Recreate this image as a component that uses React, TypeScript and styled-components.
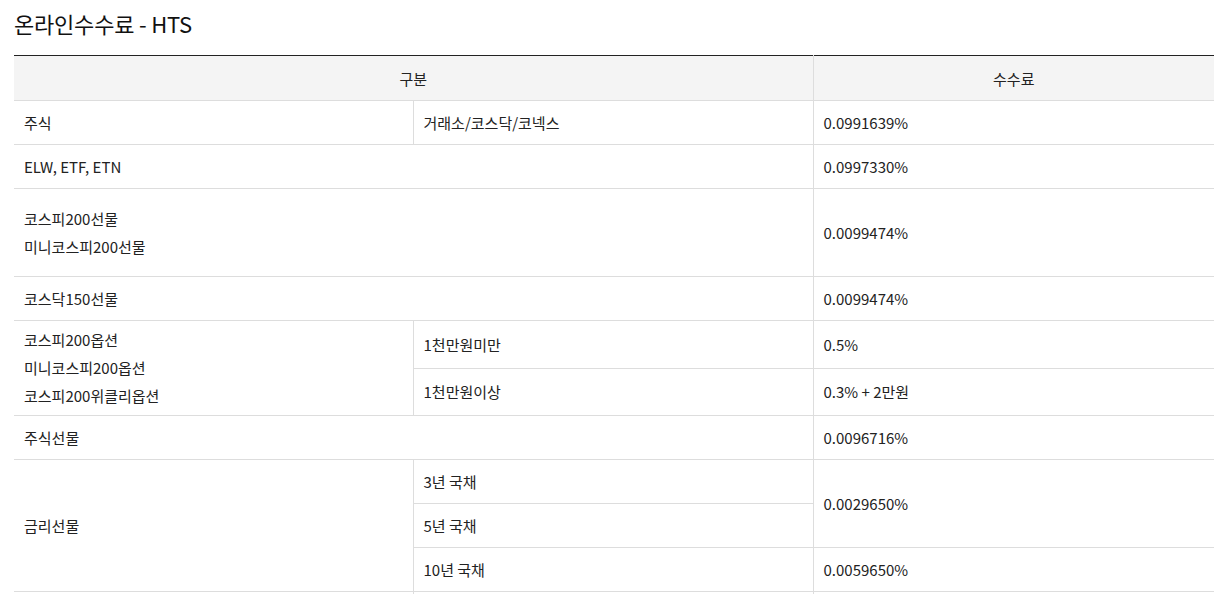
import React from "react";
import styled, { createGlobalStyle } from "styled-components";

const GlobalStyle = createGlobalStyle`
  html, body {
    margin: 0;
    padding: 0;
    background: #ffffff;
  }
  body {
    font-family: "Noto Sans CJK KR", "Noto Sans", sans-serif;
    color: #222222;
  }
`;

const Wrap = styled.div`
  padding: 7px 12px 0 14px;
`;

const Title = styled.h2`
  margin: 0 0 15px;
  font-size: 22px;
  line-height: 33px;
  font-weight: 400;
  color: #111111;
  letter-spacing: -0.2px;
`;

const Table = styled.table`
  width: 1200px;
  table-layout: fixed;
  border-collapse: collapse;
  border-top: 1px solid #222222;
  font-size: 15px;
`;

const Th = styled.th`
  height: 44px;
  padding: 0;
  background: #f4f4f4;
  font-weight: 400;
  color: #222222;
  text-align: center;
  border-bottom: 1px solid #dddddd;
  border-left: 1px solid #dddddd;
  &:first-child {
    border-left: none;
  }
`;

const Td = styled.td<{ $h?: number; $first?: boolean }>`
  height: ${(p) => p.$h ?? 43}px;
  padding: 0 10px;
  line-height: 28px;
  vertical-align: middle;
  border-bottom: 1px solid #dddddd;
  border-left: ${(p) => (p.$first ? "none" : "1px solid #dddddd")};
  color: #222222;
`;

const Line = styled.div`
  line-height: 28px;
`;

type Sub = { name: string; fee?: string; feeSpan?: number };

const App = () => {
  const bonds: Sub[] = [
    { name: "3년 국채", fee: "0.0029650%", feeSpan: 2 },
    { name: "5년 국채" },
    { name: "10년 국채", fee: "0.0059650%", feeSpan: 1 },
  ];

  return (
    <Wrap>
      <GlobalStyle />
      <Title>온라인수수료 - HTS</Title>
      <Table>
        <colgroup>
          <col style={{ width: 399 }} />
          <col style={{ width: 400 }} />
          <col style={{ width: 401 }} />
        </colgroup>
        <thead>
          <tr>
            <Th colSpan={2}>구분</Th>
            <Th>수수료</Th>
          </tr>
        </thead>
        <tbody>
          <tr>
            <Td $first>주식</Td>
            <Td>거래소/코스닥/코넥스</Td>
            <Td>0.0991639%</Td>
          </tr>
          <tr>
            <Td $first colSpan={2}>ELW, ETF, ETN</Td>
            <Td>0.0997330%</Td>
          </tr>
          <tr>
            <Td $first colSpan={2} $h={87}>
              <Line>코스피200선물</Line>
              <Line>미니코스피200선물</Line>
            </Td>
            <Td $h={87}>0.0099474%</Td>
          </tr>
          <tr>
            <Td $first colSpan={2}>코스닥150선물</Td>
            <Td>0.0099474%</Td>
          </tr>
          <tr>
            <Td $first rowSpan={2} $h={94}>
              <Line>코스피200옵션</Line>
              <Line>미니코스피200옵션</Line>
              <Line>코스피200위클리옵션</Line>
            </Td>
            <Td $h={47}>1천만원미만</Td>
            <Td $h={47}>0.5%</Td>
          </tr>
          <tr>
            <Td $h={46}>1천만원이상</Td>
            <Td $h={46}>0.3% + 2만원</Td>
          </tr>
          <tr>
            <Td $first colSpan={2}>주식선물</Td>
            <Td>0.0096716%</Td>
          </tr>
          {bonds.map((b, i) => (
            <tr key={b.name}>
              {i === 0 && (
                <Td $first rowSpan={3}>
                  금리선물
                </Td>
              )}
              <Td>{b.name}</Td>
              {b.fee && <Td rowSpan={b.feeSpan}>{b.fee}</Td>}
            </tr>
          ))}
          <tr>
            <Td $first />
            <Td />
            <Td />
          </tr>
        </tbody>
      </Table>
    </Wrap>
  );
};

export default App;
